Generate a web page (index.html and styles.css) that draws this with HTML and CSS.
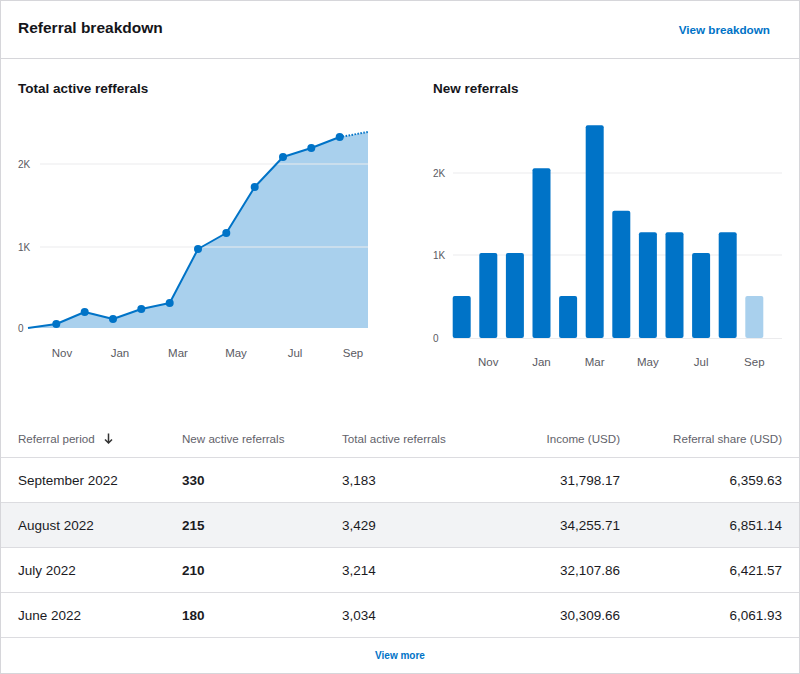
FILE: index.html
```html
<!DOCTYPE html>
<html>
<head>
<meta charset="utf-8">
<link rel="stylesheet" href="styles.css">
</head>
<body>
<div class="card">
  <div class="card-header">
    <h1 class="title">Referral breakdown</h1>
    <a class="link">View breakdown</a>
  </div>
  <div class="charts">
    <div class="chart">
      <h2 class="chart-title">Total active refferals</h2>
      <svg class="chart-svg" width="350" height="280" viewBox="0 0 350 280">
        <polygon class="area" points="10,231 38.3,227 66.7,215 95,222 123.3,212 151.7,206 180,152 208.3,136 236.7,90 265,60 293.3,51 321.7,40 350,35 350,231"/>
        <line class="grid" x1="22" y1="67" x2="350" y2="67"/>
        <line class="grid" x1="22" y1="150" x2="350" y2="150"/>
        <polyline class="line" points="10,231 38.3,227 66.7,215 95,222 123.3,212 151.7,206 180,152 208.3,136 236.7,90 265,60 293.3,51 321.7,40"/>
        <line class="line dotted" x1="321.7" y1="40" x2="350" y2="35"/>
        <g class="dots">
          <circle cx="38.3" cy="227" r="4"/>
          <circle cx="66.7" cy="215" r="4"/>
          <circle cx="95" cy="222" r="4"/>
          <circle cx="123.3" cy="212" r="4"/>
          <circle cx="151.7" cy="206" r="4"/>
          <circle cx="180" cy="152" r="4"/>
          <circle cx="208.3" cy="136" r="4"/>
          <circle cx="236.7" cy="90" r="4"/>
          <circle cx="265" cy="60" r="4"/>
          <circle cx="293.3" cy="51" r="4"/>
          <circle cx="321.7" cy="40" r="4"/>
        </g>
        <g class="ylab">
          <text x="0" y="71">2K</text>
          <text x="0" y="154">1K</text>
          <text x="0" y="235">0</text>
        </g>
        <g class="xlab">
          <text x="44" y="260">Nov</text>
          <text x="102" y="260">Jan</text>
          <text x="160" y="260">Mar</text>
          <text x="218" y="260">May</text>
          <text x="277" y="260">Jul</text>
          <text x="335" y="260">Sep</text>
        </g>
      </svg>
    </div>
    <div class="chart">
      <h2 class="chart-title">New referrals</h2>
      <svg class="chart-svg" width="350" height="280" viewBox="0 0 350 280">
        <line class="grid" x1="20" y1="76" x2="349" y2="76"/>
        <line class="grid" x1="20" y1="158" x2="349" y2="158"/>
        <line class="grid" x1="20" y1="241.5" x2="349" y2="241.5"/>
        <g class="bars">
          <rect x="19.7" y="199" width="18" height="42" rx="2"/>
          <rect x="46.3" y="156" width="18" height="85" rx="2"/>
          <rect x="72.9" y="156" width="18" height="85" rx="2"/>
          <rect x="99.5" y="71.3" width="18" height="169.7" rx="2"/>
          <rect x="126.1" y="199" width="18" height="42" rx="2"/>
          <rect x="152.7" y="28.3" width="18" height="212.7" rx="2"/>
          <rect x="179.3" y="113.7" width="18" height="127.3" rx="2"/>
          <rect x="205.9" y="135.3" width="18" height="105.7" rx="2"/>
          <rect x="232.5" y="135.3" width="18" height="105.7" rx="2"/>
          <rect x="259.1" y="156" width="18" height="85" rx="2"/>
          <rect x="285.7" y="135.3" width="18" height="105.7" rx="2"/>
          <rect class="light" x="312.3" y="199" width="18" height="42" rx="2"/>
        </g>
        <g class="ylab">
          <text x="0" y="80">2K</text>
          <text x="0" y="162">1K</text>
          <text x="0" y="245">0</text>
        </g>
        <g class="xlab">
          <text x="55.3" y="269">Nov</text>
          <text x="108.5" y="269">Jan</text>
          <text x="161.7" y="269">Mar</text>
          <text x="214.9" y="269">May</text>
          <text x="268.1" y="269">Jul</text>
          <text x="321.3" y="269">Sep</text>
        </g>
      </svg>
    </div>
  </div>
  <div class="table">
    <div class="row head">
      <div class="cell">Referral period <svg class="sort" width="9" height="11" viewBox="0 0 9 11"><path d="M4.5 0.5 V10 M1 6.5 L4.5 10 L8 6.5" fill="none" stroke="#333" stroke-width="1.5"/></svg></div>
      <div class="cell">New active referrals</div>
      <div class="cell">Total active referrals</div>
      <div class="cell num">Income (USD)</div>
      <div class="cell num">Referral share (USD)</div>
    </div>
    <div class="row">
      <div class="cell">September 2022</div>
      <div class="cell strong">330</div>
      <div class="cell">3,183</div>
      <div class="cell num">31,798.17</div>
      <div class="cell num">6,359.63</div>
    </div>
    <div class="row alt">
      <div class="cell">August 2022</div>
      <div class="cell strong">215</div>
      <div class="cell">3,429</div>
      <div class="cell num">34,255.71</div>
      <div class="cell num">6,851.14</div>
    </div>
    <div class="row">
      <div class="cell">July 2022</div>
      <div class="cell strong">210</div>
      <div class="cell">3,214</div>
      <div class="cell num">32,107.86</div>
      <div class="cell num">6,421.57</div>
    </div>
    <div class="row">
      <div class="cell">June 2022</div>
      <div class="cell strong">180</div>
      <div class="cell">3,034</div>
      <div class="cell num">30,309.66</div>
      <div class="cell num">6,061.93</div>
    </div>
  </div>
  <div class="card-footer">
    <a class="link small">View more</a>
  </div>
</div>
</body>
</html>
```

FILE: styles.css
```css
* { box-sizing: border-box; }
html, body { margin: 0; padding: 0; background: #fff; }
body {
  font-family: "Liberation Sans", Arial, Helvetica, sans-serif;
  color: #1b1b1f;
}
.card {
  width: 800px;
  height: 674px;
  border: 1px solid #d6d6da;
  display: flex;
  flex-direction: column;
  background: #fff;
}
.card-header {
  height: 58px;
  border-bottom: 1px solid #d6d6da;
  display: flex;
  align-items: center;
  justify-content: space-between;
  padding: 0 29px 0 17px;
}
.title {
  margin: 0;
  font-size: 15.5px;
  font-weight: bold;
  color: #15151a;
  position: relative;
  top: -2px;
}
.link {
  color: #0073c7;
  font-weight: bold;
  font-size: 11.7px;
  text-decoration: none;
  cursor: pointer;
}
.link.small { font-size: 10px; }
.charts {
  height: 362px;
  display: grid;
  grid-template-columns: 349px 349px;
  column-gap: 66px;
  padding: 21px 17px 0 17px;
}
.chart { display: flex; flex-direction: column; }
.chart-title {
  margin: 0;
  font-size: 13.5px;
  font-weight: bold;
  line-height: 17px;
  color: #15151a;
}
.chart-svg { overflow: visible; display: block; margin-top: 0; }
.area { fill: #a9d0ed; }
.grid { stroke: #ebebed; stroke-width: 1.2; }
.line { fill: none; stroke: #0073c7; stroke-width: 2; stroke-linejoin: round; }
.line.dotted { stroke-dasharray: 1.5 1.5; stroke-width: 2; }
.dots circle { fill: #0073c7; }
.bars rect { fill: #0073c7; }
.bars rect.light { fill: #a9d0ed; }
.ylab text { font-size: 10px; fill: #5a5a62; font-family: "Liberation Sans", Arial, sans-serif; }
.xlab text { font-size: 11.5px; fill: #5a5a62; text-anchor: middle; font-family: "Liberation Sans", Arial, sans-serif; }
.table { display: flex; flex-direction: column; }
.row {
  display: grid;
  grid-template-columns: 164px 160px 138px 140px 162px;
  padding: 0 17px;
  height: 45px;
  align-items: center;
  border-bottom: 1px solid #dcdce0;
  font-size: 13.5px;
}
.row.head {
  height: 37px;
  font-size: 11.6px;
  color: #62626a;
  padding-bottom: 1px;
}
.row.alt { background: #f2f3f5; }
.cell { white-space: nowrap; }
.cell.num { text-align: right; }
.cell.strong { font-weight: bold; }
.sort { margin-left: 6px; vertical-align: -1px; }
.card-footer {
  flex: 1;
  display: flex;
  align-items: center;
  justify-content: center;
}
```
